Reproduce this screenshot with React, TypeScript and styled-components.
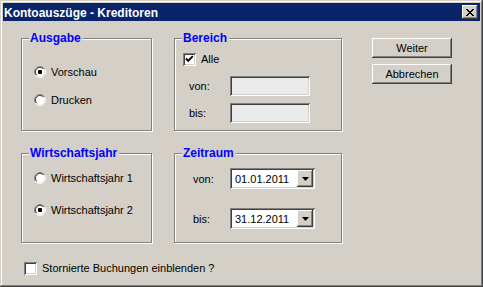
import { FC, ReactNode } from "react"
import styled, { createGlobalStyle } from "styled-components"

const GlobalStyle = createGlobalStyle`
	html, body {
		margin: 0;
		padding: 0;
		background: #d4d0c8;
	}
	body {
		font-family: "Liberation Sans", Arial, sans-serif;
		font-size: 11px;
		color: #000;
	}
`

const raised = `
	box-shadow: inset -1px -1px #404040, inset 1px 1px #ffffff, inset -2px -2px #808080, inset 2px 2px #d4d0c8;
`
const sunken = `
	box-shadow: inset 1px 1px #808080, inset -1px -1px #ffffff, inset 2px 2px #404040, inset -2px -2px #d4d0c8;
`

const Radio: FC<{ checked?: boolean; label: string }> = ({ checked, label }) => (
	<Option>
		<RadioMark>
			<svg width="12" height="12" viewBox="0 0 12 12">
				<path d="M10.5 3 A5.2 5.2 0 0 0 3 1.5 A5.2 5.2 0 0 0 1.5 9" fill="none" stroke="#808080" strokeWidth="1" />
				<circle cx="6" cy="6" r="4.5" fill="#fff" />
				<path d="M9.2 2.8 A4.3 4.3 0 0 0 2.8 9.2" fill="none" stroke="#404040" strokeWidth="1" />
				<path d="M1.5 9 A5.2 5.2 0 0 0 10.5 3" fill="none" stroke="#fff" strokeWidth="1" />
				{checked && <rect x="4" y="4" width="4" height="4" rx="1" fill="#000" />}
			</svg>
		</RadioMark>
		<span>{label}</span>
	</Option>
)

const Check: FC<{ checked?: boolean; children?: ReactNode }> = ({ checked, children }) => (
	<Option>
		<CheckBox>
			{checked && (
				<svg width="9" height="9" viewBox="0 0 9 9">
					<path d="M1 3.5 L3.2 5.8 L7.8 1.2" fill="none" stroke="#000" strokeWidth="1.9" />
				</svg>
			)}
		</CheckBox>
		{children}
	</Option>
)

const Combo: FC<{ value: string }> = ({ value }) => (
	<ComboBox>
		<span>{value}</span>
		<DropButton>
			<svg width="7" height="4" viewBox="0 0 7 4">
				<path d="M0 0 H7 L3.5 4 Z" fill="#000" />
			</svg>
		</DropButton>
	</ComboBox>
)

const App: FC = () => {
	return (
		<>
			<GlobalStyle />
			<Window>
				<TitleBar>
					<span>Kontoauszüge - Kreditoren</span>
					<CloseButton>
						<svg width="8" height="7" viewBox="0 0 8 7" shapeRendering="crispEdges">
							<path d="M0 0h2v1h-2zM6 0h2v1h-2zM1 1h2v1h-2zM5 1h2v1h-2zM2 2h4v1h-4zM3 3h2v1h-2zM2 4h4v1h-4zM1 5h2v1h-2zM5 5h2v1h-2zM0 6h2v1h-2zM6 6h2v1h-2z" fill="#000" />
						</svg>
					</CloseButton>
				</TitleBar>

				<Body>
					<Main>
						<Groups>
							<Group $pt={25} $pl={12} $gap={12}>
								<Legend>Ausgabe</Legend>
								<Radio checked label="Vorschau" />
								<Radio label="Drucken" />
							</Group>

							<Group $pt={12} $pl={8} $gap={0}>
								<Legend>Bereich</Legend>
								<Check checked>
									<span>Alle</span>
								</Check>
								<FieldRow $mt={9} $lw={41} $lm={6}>
									<span>von:</span>
									<TextInput />
								</FieldRow>
								<FieldRow $mt={7} $lw={41} $lm={6}>
									<span>bis:</span>
									<TextInput />
								</FieldRow>
							</Group>

							<Group $pt={16} $pl={12} $gap={16}>
								<Legend>Wirtschaftsjahr</Legend>
								<Radio label="Wirtschaftsjahr 1" />
								<Radio checked label="Wirtschaftsjahr 2" />
							</Group>

							<Group $pt={14} $pl={8} $gap={0}>
								<Legend>Zeitraum</Legend>
								<FieldRow $mt={0} $lw={37} $lm={10}>
									<span>von:</span>
									<Combo value="01.01.2011" />
								</FieldRow>
								<FieldRow $mt={19} $lw={37} $lm={10}>
									<span>bis:</span>
									<Combo value="31.12.2011" />
								</FieldRow>
							</Group>
						</Groups>

						<Buttons>
							<Button>Weiter</Button>
							<Button>Abbrechen</Button>
						</Buttons>
					</Main>

					<Footer>
						<Check>
							<span>Stornierte Buchungen einblenden ?</span>
						</Check>
					</Footer>
				</Body>
			</Window>
		</>
	)
}
export default App

const Window = styled.div`
	width: 483px;
	height: 287px;
	box-sizing: border-box;
	padding: 3px;
	background: #d4d0c8;
	box-shadow: inset -1px -1px #404040, inset 1px 1px #d4d0c8, inset -2px -2px #808080, inset 2px 2px #ffffff;
	display: flex;
	flex-direction: column;
`

const TitleBar = styled.div`
	height: 18px;
	flex-shrink: 0;
	background: #0a246a;
	color: #fff;
	font-weight: bold;
	font-size: 12px;
	display: flex;
	align-items: center;
	justify-content: space-between;
	padding: 0 2px 0 1px;
	span {
		padding-top: 1px;
	}
`

const CloseButton = styled.div`
	width: 16px;
	height: 14px;
	background: #d4d0c8;
	${raised}
	display: flex;
	align-items: center;
	justify-content: center;
	svg {
		margin-left: -1px;
	}
`

const Body = styled.div`
	padding: 17px 0 0 18px;
	display: flex;
	flex-direction: column;
`

const Main = styled.div`
	display: flex;
	align-items: flex-start;
`

const Groups = styled.div`
	display: grid;
	grid-template-columns: 131px 168px;
	grid-template-rows: 93px 90px;
	column-gap: 22px;
	row-gap: 22px;
`

const Group = styled.div<{ $pt: number; $pl: number; $gap: number }>`
	position: relative;
	box-sizing: border-box;
	border: 1px solid #808080;
	box-shadow: inset 1px 1px #fff, 1px 1px #fff;
	padding: ${p => p.$pt}px 0 0 ${p => p.$pl}px;
	display: flex;
	flex-direction: column;
	gap: ${p => p.$gap}px;
`

const Legend = styled.div`
	position: absolute;
	top: -8px;
	left: 7px;
	padding: 0 2px 0 1px;
	background: #d4d0c8;
	color: #0000ff;
	font-weight: bold;
	font-size: 12px;
	line-height: 15px;
`

const Option = styled.div`
	height: 16px;
	display: flex;
	align-items: center;
	gap: 5px;
	white-space: nowrap;
`

const RadioMark = styled.span`
	width: 12px;
	height: 12px;
	display: flex;
	svg {
		display: block;
	}
`

const CheckBox = styled.span`
	width: 13px;
	height: 13px;
	box-sizing: border-box;
	background: #fff;
	${sunken}
	display: flex;
	align-items: center;
	justify-content: center;
	svg {
		display: block;
	}
`

const FieldRow = styled.div<{ $mt: number; $lw: number; $lm: number }>`
	margin-top: ${p => p.$mt}px;
	display: flex;
	align-items: center;
	> span:first-child {
		width: ${p => p.$lw}px;
		margin-left: ${p => p.$lm}px;
	}
`

const TextInput = styled.div`
	width: 80px;
	height: 20px;
	box-sizing: border-box;
	background: #ebebeb;
	${sunken}
`

const ComboBox = styled.div`
	width: 85px;
	height: 21px;
	box-sizing: border-box;
	padding: 2px;
	background: #fff;
	${sunken}
	display: flex;
	align-items: center;
	justify-content: space-between;
	span {
		padding-left: 3px;
		font-size: 11px;
	}
`

const DropButton = styled.div`
	width: 16px;
	height: 17px;
	background: #d4d0c8;
	${raised}
	display: flex;
	align-items: center;
	justify-content: center;
`

const Buttons = styled.div`
	margin-left: 30px;
	display: flex;
	flex-direction: column;
	gap: 6px;
`

const Button = styled.div`
	width: 80px;
	height: 20px;
	box-sizing: border-box;
	background: #d4d0c8;
	${raised}
	display: flex;
	align-items: center;
	justify-content: center;
`

const Footer = styled.div`
	margin-top: 17px;
	padding-left: 3px;
`
